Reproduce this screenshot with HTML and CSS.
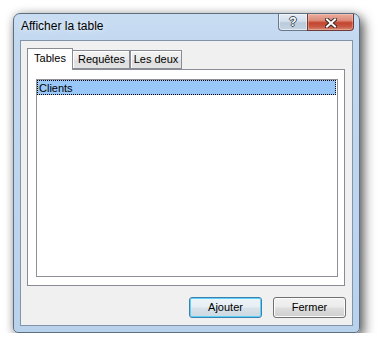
FILE: index.html
```html
<!DOCTYPE html>
<html lang="fr">
<head>
<meta charset="utf-8">
<title>Afficher la table</title>
<link rel="stylesheet" href="styles.css">
</head>
<body>
<div class="window">
  <div class="titlebar">
    <span class="title">Afficher la table</span>
    <div class="caption">
      <div class="cbtn help"><span class="qmark">?</span></div>
      <div class="cbtn close">
        <svg width="12" height="10" viewBox="0 0 12 10">
          <path d="M2 1.5 L10 8.5 M10 1.5 L2 8.5" stroke="#3a2a2a" stroke-width="4" stroke-linecap="square" fill="none"/>
          <path d="M2 1.5 L10 8.5 M10 1.5 L2 8.5" stroke="#ffffff" stroke-width="2" stroke-linecap="square" fill="none"/>
        </svg>
      </div>
    </div>
  </div>
  <div class="client">
    <div class="tabs">
      <div class="tab active">Tables</div>
      <div class="tab t2">Requêtes</div>
      <div class="tab t3">Les deux</div>
    </div>
    <div class="panel">
      <div class="list">
        <div class="row selected">Clients</div>
      </div>
    </div>
    <div class="buttons">
      <div class="btn default">Ajouter</div>
      <div class="btn">Fermer</div>
    </div>
  </div>
</div>
</body>
</html>
```
FILE: styles.css
```css
html, body {
  margin: 0;
  background: #ffffff;
}
body {
  padding: 13px 0 0 13px;
  font-family: "Liberation Sans", Arial, sans-serif;
  font-size: 11px;
  color: #000;
}
.window {
  width: 347px;
  height: 320px;
  box-sizing: border-box;
  border: 1px solid #5e6f82;
  border-radius: 7px 7px 5px 5px;
  background: linear-gradient(#c9ddf2 0px, #c2d8f0 30px, #b9d2ec 100%);
  box-shadow: 4px 5px 12px rgba(0, 0, 0, 0.6), 0 0 9px rgba(0, 0, 0, 0.18);
  padding: 0 6px 6px 6px;
  display: flex;
  flex-direction: column;
}
.titlebar {
  height: 26px;
  display: flex;
  justify-content: space-between;
  align-items: flex-start;
  padding-left: 1px;
  margin-right: -1px;
}
.title {
  font-size: 12px;
  line-height: 15px;
  margin-top: 5px;
  color: #000;
  text-shadow: 0 0 6px rgba(255, 255, 255, 0.9);
}
.caption {
  display: flex;
}
.cbtn {
  height: 17px;
  box-sizing: border-box;
  border: 1px solid #6a7888;
  border-top: none;
  display: flex;
  align-items: center;
  justify-content: center;
}
.help {
  width: 29px;
  border-radius: 0 0 0 4px;
  border-right: none;
  background: linear-gradient(#e4ecf5 0%, #d3dfec 45%, #bccbdc 55%, #c4d3e3 100%);
  box-shadow: inset 0 0 0 1px rgba(255, 255, 255, 0.5);
}
.qmark {
  font-family: "Liberation Sans", Arial, sans-serif;
  font-weight: bold;
  font-size: 12px;
  line-height: 12px;
  color: #fff;
  text-shadow: 1px 0 0 #3d4a58, -1px 0 0 #3d4a58, 0 1px 0 #3d4a58, 0 -1px 0 #3d4a58;
}
.close {
  width: 47px;
  border-color: #6d3b35;
  border-radius: 0 0 4px 0;
  background: linear-gradient(#eaaea0 0%, #dc8a78 40%, #c4442f 55%, #c85a45 80%, #d98a74 100%);
  box-shadow: inset 0 0 0 1px rgba(255, 220, 210, 0.35);
}
.close svg {
  display: block;
  margin-top: 1px;
}
.client {
  flex: 1;
  border: 1px solid #8394a8;
  background: #f0f0f0;
  padding: 7px 7px 7px 6px;
  display: flex;
  flex-direction: column;
}
.tabs {
  height: 21px;
  display: flex;
  align-items: flex-end;
  position: relative;
  z-index: 1;
}
.tab {
  box-sizing: border-box;
  border: 1px solid #898c95;
  border-bottom: none;
  height: 19px;
  padding-top: 2px;
  line-height: 13px;
  text-align: center;
  background: linear-gradient(#f3f3f3 0%, #ebebeb 50%, #dedede 51%, #e3e3e3 100%);
  box-shadow: inset 1px 1px 0 #ffffff;
}
.tab.active {
  width: 46px;
  height: 22px;
  margin-bottom: -1px;
  background: #ffffff;
  box-shadow: none;
  padding-top: 3px;
}
.tab.t2 {
  width: 57px;
  border-left: none;
  padding-left: 1px;
}
.tab.t3 {
  width: 52px;
}
.tab.t2, .tab.t3 {
  border-bottom: 1px solid #898c95;
  height: 19px;
  padding-top: 2px;
}
.panel {
  height: 217px;
  box-sizing: border-box;
  border: 1px solid #898c95;
  background: #ffffff;
  padding: 9px 6px 8px 8px;
  display: flex;
}
.list {
  flex: 1;
  border: 1px solid #8e9096;
  background: #fff;
}
.row {
  line-height: 12px;
  padding: 1px 0 0 1px;
  margin-right: 1px;
}
.row.selected {
  background: #99c7f8;
  border: 1px dotted #000;
}
.buttons {
  margin-top: 11px;
  display: flex;
  justify-content: flex-end;
  gap: 11px;
  margin-right: -1px;
}
.btn {
  width: 73px;
  height: 21px;
  box-sizing: border-box;
  border: 1px solid #707070;
  border-radius: 3px;
  line-height: 19px;
  text-align: center;
  background: linear-gradient(#f2f2f2 0%, #ebebeb 48%, #dddddd 52%, #cfcfcf 100%);
  box-shadow: inset 0 0 0 1px #fcfcfc;
}
.btn.default {
  border-color: #3c7fb1;
  box-shadow: inset 0 0 0 1px #5ed2f6;
  background: linear-gradient(#eef4f8 0%, #e6eef4 48%, #d8e2ea 52%, #cbd8e2 100%);
}
```
